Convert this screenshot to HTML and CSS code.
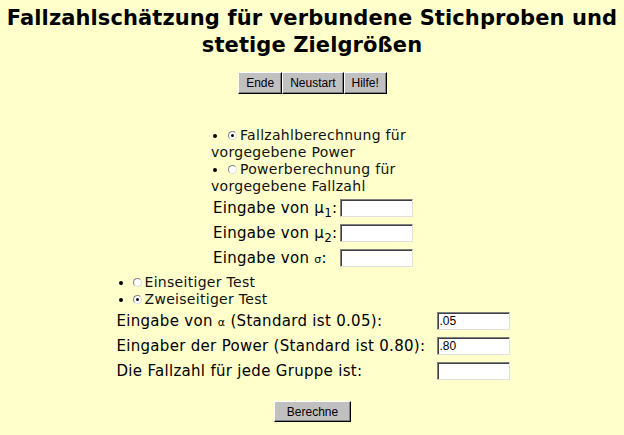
FILE: index.html
```html
<!DOCTYPE html>
<html lang="de">
<head>
<meta charset="utf-8">
<title>Fallzahlschätzung</title>
<link rel="stylesheet" href="styles.css">
</head>
<body>
<h1 class="title">Fallzahlschätzung für verbundene Stichproben und stetige Zielgrößen</h1>
<div class="nav">
  <button class="btn">Ende</button><button class="btn">Neustart</button><button class="btn">Hilfe!</button>
</div>
<div class="block1">
  <ul class="opts">
    <li><span class="radio checked"></span>Fallzahlberechnung für vorgegebene Power</li>
    <li><span class="radio"></span>Powerberechnung für vorgegebene Fallzahl</li>
  </ul>
  <div class="row"><span class="lbl">Eingabe von μ<sub>1</sub>:</span><span class="field"></span></div>
  <div class="row"><span class="lbl">Eingabe von μ<sub>2</sub>:</span><span class="field"></span></div>
  <div class="row"><span class="lbl">Eingabe von <span class="greek">σ</span>:</span><span class="field"></span></div>
</div>
<div class="block2">
  <ul class="opts tests">
    <li><span class="radio"></span>Einseitiger Test</li>
    <li><span class="radio checked"></span>Zweiseitiger Test</li>
  </ul>
  <div class="row"><span class="lbl">Eingabe von <span class="greek">α</span> (Standard ist 0.05):</span><span class="field">.05</span></div>
  <div class="row"><span class="lbl">Eingaber der Power (Standard ist 0.80):</span><span class="field">.80</span></div>
  <div class="row"><span class="lbl">Die Fallzahl für jede Gruppe ist:</span><span class="field"></span></div>
</div>
<div class="submit"><button class="btn big">Berechne</button></div>
</body>
</html>
```
FILE: styles.css
```css
html, body { margin: 0; padding: 0; }
body {
  background: #ffffcc;
  color: #000;
  font-family: "DejaVu Sans", Verdana, sans-serif;
  width: 624px;
}
.title {
  margin: 0;
  padding: 5px 0 0;
  font-size: 21px;
  line-height: 27px;
  font-weight: bold;
  text-align: center;
  letter-spacing: 0.1px;
}
.nav {
  display: flex;
  justify-content: center;
  margin-top: 13px;
  padding-left: 1px;
}
.btn {
  font-family: "Liberation Sans", Arial, sans-serif;
  font-size: 12px;
  height: 22px;
  padding: 0 7px;
  background: #c0c0c0;
  color: #000;
  border: 1px solid;
  border-color: #fff #000 #000 #fff;
  box-shadow: inset -1px -1px 0 #808080;
  margin: 0;
}
.block1 {
  width: 202px;
  margin: 33px auto 0;
  padding-left: 0;
}
.opts {
  margin: 0;
  padding: 0;
  list-style: none;
  font-family: "DejaVu Sans", sans-serif;
  font-size: 14px;
  line-height: 17px;
  letter-spacing: 0.3px;
  color: #111;
}
.opts li::before {
  content: "";
  display: inline-block;
  width: 4px;
  height: 4px;
  border-radius: 50%;
  background: #000;
  margin: 0 11px 2px 2px;
}
.radio {
  display: inline-block;
  position: relative;
  width: 9px;
  height: 9px;
  border-radius: 50%;
  border: 1px solid #808080;
  border-right-color: #ddd;
  border-bottom-color: #ddd;
  background: #fff;
  box-sizing: border-box;
  margin-right: 3px;
  vertical-align: 0;
}
.radio.checked::after {
  content: "";
  position: absolute;
  left: 2px;
  top: 2px;
  width: 3px;
  height: 3px;
  border-radius: 50%;
  background: #000;
}
.row {
  display: flex;
  justify-content: space-between;
  align-items: center;
  height: 25px;
  font-size: 15px;
  letter-spacing: 0.3px;
}
.block1 .row { padding-left: 2px; }
.lbl sub { font-size: 12px; vertical-align: -4px; line-height: 0; }
.greek { font-size: 11px; }
.field {
  width: 73px;
  height: 18px;
  box-sizing: border-box;
  background: #fff;
  border: 1px solid;
  border-color: #808080 #e0e0e0 #e0e0e0 #808080;
  box-shadow: inset 1px 1px 0 #404040;
  font-family: "Liberation Sans", Arial, sans-serif;
  font-size: 12px;
  line-height: 16px;
  padding-left: 2px;
  letter-spacing: 0;
}
.block2 {
  width: 393px;
  margin: 4px auto 0;
  padding-left: 2px;
}
.tests li::before { margin-left: 2px; margin-right: 10px; }
.tests { margin-bottom: 0; line-height: 17px; }
.submit {
  display: flex;
  justify-content: center;
  margin-top: 18px;
  padding-left: 1px;
}
.btn.big { width: 77px; height: 21px; }
```
